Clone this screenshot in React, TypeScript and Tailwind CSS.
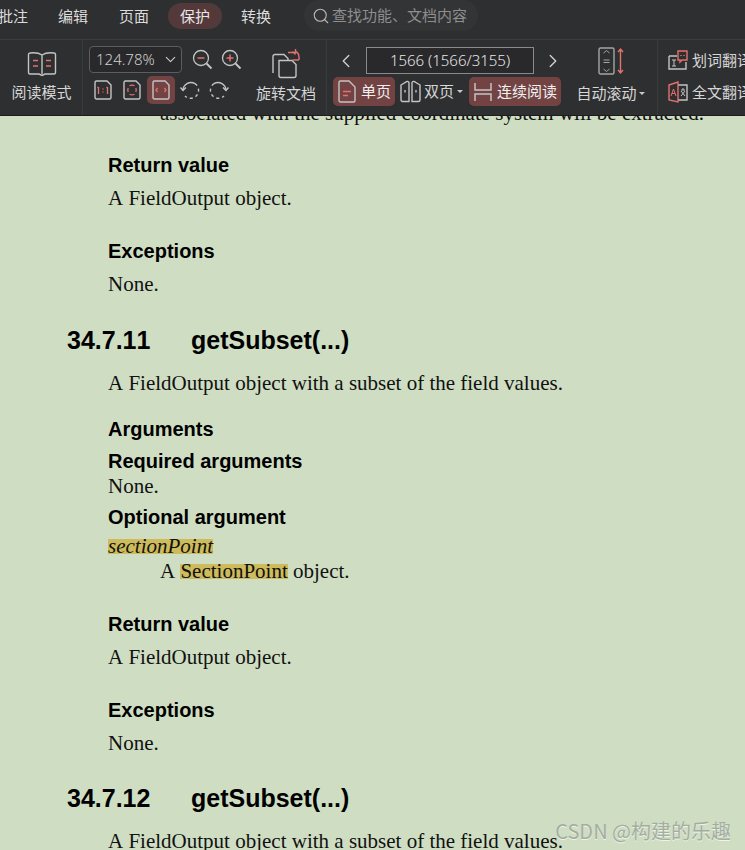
import { ChevronDown, ChevronLeft, ChevronRight, Search } from "lucide-react";
import type { ReactNode } from "react";

const RED = "#e2726e";
const GREY = "#c4c4c4";

function Tab({ label, active, className = "" }: { label: string; active?: boolean; className?: string }) {
  return (
    <span
      className={`flex h-[26px] w-[54px] shrink-0 items-center justify-center rounded-[13px] text-[15px] ${
        active ? "bg-[#54393a] text-[#e8e8e8]" : "text-[#dcdcdc]"
      } ${className}`}
    >
      {label}
    </span>
  );
}

function Icon({ size, w, h, children }: { size?: number; w?: number; h?: number; children: ReactNode }) {
  const width = w ?? size ?? 20;
  const height = h ?? size ?? 20;
  return (
    <svg width={width} height={height} viewBox={`0 0 ${width} ${height}`} fill="none" stroke={GREY} strokeWidth="1.4" className="shrink-0">
      {children}
    </svg>
  );
}

function PageIcon({ kind }: { kind: "actual" | "fit" | "width" }) {
  return (
    <Icon w={18} h={20}>
      <path d="M1 2.500a1.500 1.500 0 0 1 1.500-1.500H13l4 4v12.500a1.500 1.500 0 0 1-1.500 1.500h-13A1.500 1.500 0 0 1 1 17.500z" />
      {kind === "actual" && (
        <g stroke={RED} strokeWidth="1.300">
          <path d="M4.500 7v7M3.500 8l1-1M13.500 7v7M12.500 8l1-1M9 8.500v1M9 11.500v1" />
        </g>
      )}
      {kind === "fit" && (
        <g stroke={RED} strokeWidth="1.300">
          <path d="M6.500 5.800a5 5 0 0 1 5 0M12.800 8a5 5 0 0 1 0 4M11.500 14.200a5 5 0 0 1-5 0M5.200 12a5 5 0 0 1 0-4" />
        </g>
      )}
      {kind === "width" && (
        <g stroke={RED} strokeWidth="1.300">
          <path d="M5.500 8l-1.500 2 1.500 2M12.500 8l1.500 2-1.500 2" />
        </g>
      )}
    </Icon>
  );
}

function RotateIcon({ flip }: { flip?: boolean }) {
  return (
    <svg width="21" height="21" viewBox="0 0 21 21" fill="none" stroke={GREY} strokeWidth="1.4" className={`shrink-0 ${flip ? "-scale-x-100" : ""}`}>
      <path d="M3 10.500A8 8 0 0 1 15 3.600" />
      <path d="M15 3.600A8 8 0 1 1 5 16" strokeDasharray="3 3" />
      <path d="M0.500 7.500l2.500 3 3-3" />
    </svg>
  );
}

function ZoomIcon({ minus, className = "" }: { minus?: boolean; className?: string }) {
  return (
    <svg width="21" height="21" viewBox="0 0 21 21" fill="none" stroke={GREY} strokeWidth="1.300" className={`shrink-0 ${className}`}>
      <circle cx="9" cy="9" r="7.500" />
      <path d="M5.500 9h7" stroke={RED} strokeWidth="1.500" />
      {!minus && <path d="M9 5.500v7" stroke={RED} strokeWidth="1.500" />}
      <path d="M14.500 14.500l5 5" strokeWidth="2" />
    </svg>
  );
}

function Caret() {
  return <span className="h-0 w-0 border-x-[3px] border-t-[3px] border-x-transparent border-t-[#c8c8c8]" />;
}

function Toolbar() {
  return (
    <div className="flex h-[75px] text-[15px] text-[#d6d6d6]">
      {/* reading mode */}
      <div className="flex w-[83px] shrink-0 flex-col items-center border-r border-[#3a3b3d] pl-[1px] pt-[10px]">
        <Icon w={30} h={27}>
          <path d="M15 5c-3-2-8-2.500-12-2a1.500 1.500 0 0 0-1.500 1.500v18c0 1 1 1.500 1.500 1.500h9l3 1.500 3-1.500h9c.5 0 1.500-.5 1.500-1.500v-18a1.500 1.500 0 0 0-1.500-1.500c-4-.5-9 0-12 2v19" />
          <path d="M6 10.500h5M6 16h5M19 10.500h5M19 16h5" stroke={RED} />
        </Icon>
        <span className="mt-[5px] whitespace-nowrap leading-[20px]">阅读模式</span>
      </div>

      {/* zoom + rotate */}
      <div className="flex w-[244px] shrink-0 border-r border-[#3a3b3d] pl-[6px] pt-[6px]">
        <div className="flex w-[160px] flex-col">
          <div className="flex items-center">
            <div className="flex h-[27px] w-[93px] items-center justify-between rounded-[4px] border border-[#5c5d61] bg-[#29292b] pl-[6px] pr-[2px] font-['Noto_Sans'] text-[15px] font-light text-[#cfcfcf]">
              124.78%
              <ChevronDown size={17} strokeWidth={1.5} />
            </div>
            <ZoomIcon minus className="ml-[10px]" />
            <ZoomIcon className="ml-[8px]" />
          </div>
          <div className="mt-[3px] flex items-center">
            <div className="ml-[5px] flex w-[18px] justify-center">
              <PageIcon kind="actual" />
            </div>
            <div className="ml-[11px] flex w-[18px] justify-center">
              <PageIcon kind="fit" />
            </div>
            <div className="ml-[6px] flex h-[28px] w-[28px] items-center justify-center rounded-[5px] bg-[#734344]">
              <PageIcon kind="width" />
            </div>
            <div className="ml-[5px]">
              <RotateIcon />
            </div>
            <div className="ml-[7px]">
              <RotateIcon flip />
            </div>
          </div>
        </div>
        <div className="ml-[6px] flex w-[62px] flex-col items-center pt-[2px]">
          <Icon w={32} h={32}>
            <path d="M3 25V8.500a2 2 0 0 1 2-2h9l4 4v2" />
            <path d="M9 12.500h13l4 4v11a2 2 0 0 1-2 2H11a2 2 0 0 1-2-2z" fill="#2e2f31" />
            <path d="M18 4.500h7.500V1M22.500 3.500l3 3M29 12h-6.500" stroke={RED} />
            <path d="M25.500 3.500a6 6 0 0 1 3.500 5.500v3" stroke={RED} />
          </Icon>
          <span className="mt-[3px] whitespace-nowrap leading-[20px]">旋转文档</span>
        </div>
      </div>

      {/* page navigation */}
      <div className="flex w-[331px] shrink-0 border-r border-[#3a3b3d] pl-[6px] pt-[7px]">
        <div className="flex w-[228px] shrink-0 flex-col">
          <div className="flex h-[27px] items-center">
            <ChevronLeft size={22} strokeWidth={1.5} className="ml-[2px] shrink-0 text-[#d0d0d0]" />
            <div className="ml-[9px] flex h-[27px] w-[168px] shrink-0 items-center justify-center border border-[#8a8a8a] bg-[#29292b] font-['Noto_Sans'] text-[15px] font-light text-[#e8e8e8]">
              1566 (1566/3155)
            </div>
            <ChevronRight size={22} strokeWidth={1.5} className="ml-[8px] shrink-0 text-[#d0d0d0]" />
          </div>
          <div className="mt-[3px] flex h-[29px] items-center">
            <div className="flex h-[29px] w-[62px] items-center gap-[5px] rounded-[5px] bg-[#734344] pl-[5px]">
              <Icon w={18} h={23}>
                <path d="M1 2.500a1.500 1.500 0 0 1 1.500-1.500H11l6 6v13.500a1.500 1.500 0 0 1-1.500 1.500h-13A1.500 1.500 0 0 1 1 20.500z" />
                <path d="M5 11.500h8M5 15.500h5" stroke={RED} />
              </Icon>
              <span className="whitespace-nowrap text-[#f0f0f0]">单页</span>
            </div>
            <div className="ml-[5px] flex w-[66px] items-center gap-[3px]">
              <Icon w={21} h={23}>
                <path d="M1 5 7 1.500a1.500 1.500 0 0 1 2 1.500v18.500H2.500A1.500 1.500 0 0 1 1 20zM20 5l-6-3.500a1.500 1.500 0 0 0-2 1.500v18.500h6.500A1.500 1.500 0 0 0 20 20z" />
                <path d="M5 10v2.500M16 10v2.500" />
              </Icon>
              <span className="whitespace-nowrap">双页</span>
              <span className="flex">
                <Caret />
              </span>
            </div>
            <div className="ml-[3px] flex h-[29px] w-[92px] items-center gap-[5px] rounded-[5px] bg-[#734344] pl-[5px]">
              <Icon w={18} h={20}>
                <path d="M1 1v7h16V1M1 19v-7h16v7" strokeWidth="1.500" />
              </Icon>
              <span className="whitespace-nowrap text-[#f0f0f0]">连续阅读</span>
            </div>
          </div>
        </div>
        <div className="ml-[14px] flex w-[71px] flex-col items-center">
          <Icon w={26} h={28}>
            <rect x="1" y="1" width="15" height="26" rx="1.500" stroke="#a5a5a5" />
            <path d="M5.500 6l3-2.500 3 2.500M5.500 13h6M5.500 15.500h6M5.500 22l3 2.500 3-2.500" strokeWidth="1" stroke="#a5a5a5" />
            <path d="M22.500 2v24M20 5l2.500-3 2.500 3M20 23l2.500 3 2.500-3" stroke={RED} />
          </Icon>
          <span className="mt-[8px] flex items-center gap-[2px] whitespace-nowrap leading-[20px]">
            自动滚动
            <Caret />
          </span>
        </div>
      </div>

      {/* translate */}
      <div className="flex min-w-0 flex-col gap-[10px] overflow-hidden pl-[10px] pt-[10px]">
        <div className="flex h-[21px] items-center gap-[4px] whitespace-nowrap">
          <Icon w={20} h={21}>
            <path d="M1 6h8M1 6v13h17v-7" />
            <path d="M4 10h4M6 10v6M4 16h4" strokeWidth="1" />
            <path d="M10 1h9v9h-5l-2 2v-2h-2z" stroke={RED} />
            <path d="M13 5v1M16 5v1" stroke={RED} />
          </Icon>
          划词翻译
        </div>
        <div className="flex h-[22px] items-center gap-[4px] whitespace-nowrap">
          <Icon w={20} h={22}>
            <path d="M10 4h9v15h-9" />
            <path d="M13 9h4M15 7v2M13 15l4-5M13 10l4 5" strokeWidth="1" />
            <path d="M1 4l9-3v20l-9-2z" stroke={RED} />
            <path d="M3 15l2.500-7 2.500 7M4 12.500h3" stroke={RED} strokeWidth="1" />
          </Icon>
          全文翻译
        </div>
      </div>
    </div>
  );
}

function Heading({ children, className = "" }: { children: ReactNode; className?: string }) {
  return <h3 className={`pl-[108px] font-['Liberation_Sans'] text-[20px] font-bold leading-[26px] text-black ${className}`}>{children}</h3>;
}

function Body({ children, className = "" }: { children: ReactNode; className?: string }) {
  return <p className={`whitespace-nowrap pl-[108px] text-[21px] leading-[26px] text-[#111] ${className}`}>{children}</p>;
}

function SectionTitle({ num, className = "" }: { num: string; className?: string }) {
  return (
    <h2 className={`flex pl-[67px] font-['Liberation_Sans'] text-[25px] font-bold leading-[26px] text-black ${className}`}>
      <span className="w-[124px]">{num}</span>
      <span>getSubset(...)</span>
    </h2>
  );
}

export default function App() {
  return (
    <div className="relative h-[850px] w-[745px] overflow-hidden bg-[#cfdec3] font-['Noto_Sans_CJK_SC','Noto_Sans',sans-serif]">
      <header className="relative z-10 h-[116px] border-b border-[#1c1c1d] bg-[#2e2f31]">
        <div className="flex h-[40px] border-b border-[#3c3d3f] pt-[3px]">
          <Tab label="批注" className="-ml-[14px]" />
          <Tab label="编辑" className="ml-[6px]" />
          <Tab label="页面" className="ml-[7px]" />
          <Tab label="保护" active className="ml-[7px]" />
          <Tab label="转换" className="ml-[7px]" />
          <div className="-mt-[3px] ml-[21px] flex h-[31px] w-[174px] items-center gap-[2px] whitespace-nowrap rounded-[15px] bg-[#333436] pl-[8px] text-[15px] text-[#8e8e8e]">
            <Search size={18} strokeWidth={1.5} className="shrink-0 text-[#b5b5b5]" />
            查找功能、文档内容
          </div>
        </div>
        <Toolbar />
      </header>

      <main className="-mt-[16px] font-['Liberation_Serif',serif] [font-kerning:none]">
        <p className="whitespace-nowrap pl-[160px] text-[21px] leading-[26px] text-[#111]">
          associated with the supplied coordinate system will be extracted.
        </p>
        <Heading className="mt-[26px]">Return value</Heading>
        <Body className="mt-[7px]">A FieldOutput object.</Body>
        <Heading className="mt-[27px]">Exceptions</Heading>
        <Body className="mt-[7px]">None.</Body>

        <SectionTitle num="34.7.11" className="mt-[30px]" />
        <Body className="mt-[17px]">A FieldOutput object with a subset of the field values.</Body>
        <Heading className="mt-[20px]">Arguments</Heading>
        <Heading className="mt-[6px]">Required arguments</Heading>
        <Body className="-mt-[1px]">None.</Body>
        <Heading className="mt-[5px]">Optional argument</Heading>
        <Body className="mt-[3px] italic">
          <span className="inline-block h-[15px] bg-[#cdbb5c] leading-[15px]">sectionPoint</span>
        </Body>
        <p className="-mt-[1px] pl-[160px] text-[21px] leading-[26px] text-[#111]">
          A <span className="inline-block h-[15px] bg-[#cdbb5c] leading-[15px]">SectionPoint</span> object.
        </p>
        <Heading className="mt-[27px]">Return value</Heading>
        <Body className="mt-[7px]">A FieldOutput object.</Body>
        <Heading className="mt-[27px]">Exceptions</Heading>
        <Body className="mt-[7px]">None.</Body>

        <SectionTitle num="34.7.12" className="mt-[29px]" />
        <Body className="mt-[17px]">A FieldOutput object with a subset of the field values.</Body>
      </main>

      {/* csdn watermark */}
      <span className="absolute bottom-[7px] right-[14px] text-[20px] leading-[24px] text-[#a4aea0] [text-shadow:0_1px_0_#eef2ea]">
        CSDN @构建的乐趣
      </span>
    </div>
  );
}
